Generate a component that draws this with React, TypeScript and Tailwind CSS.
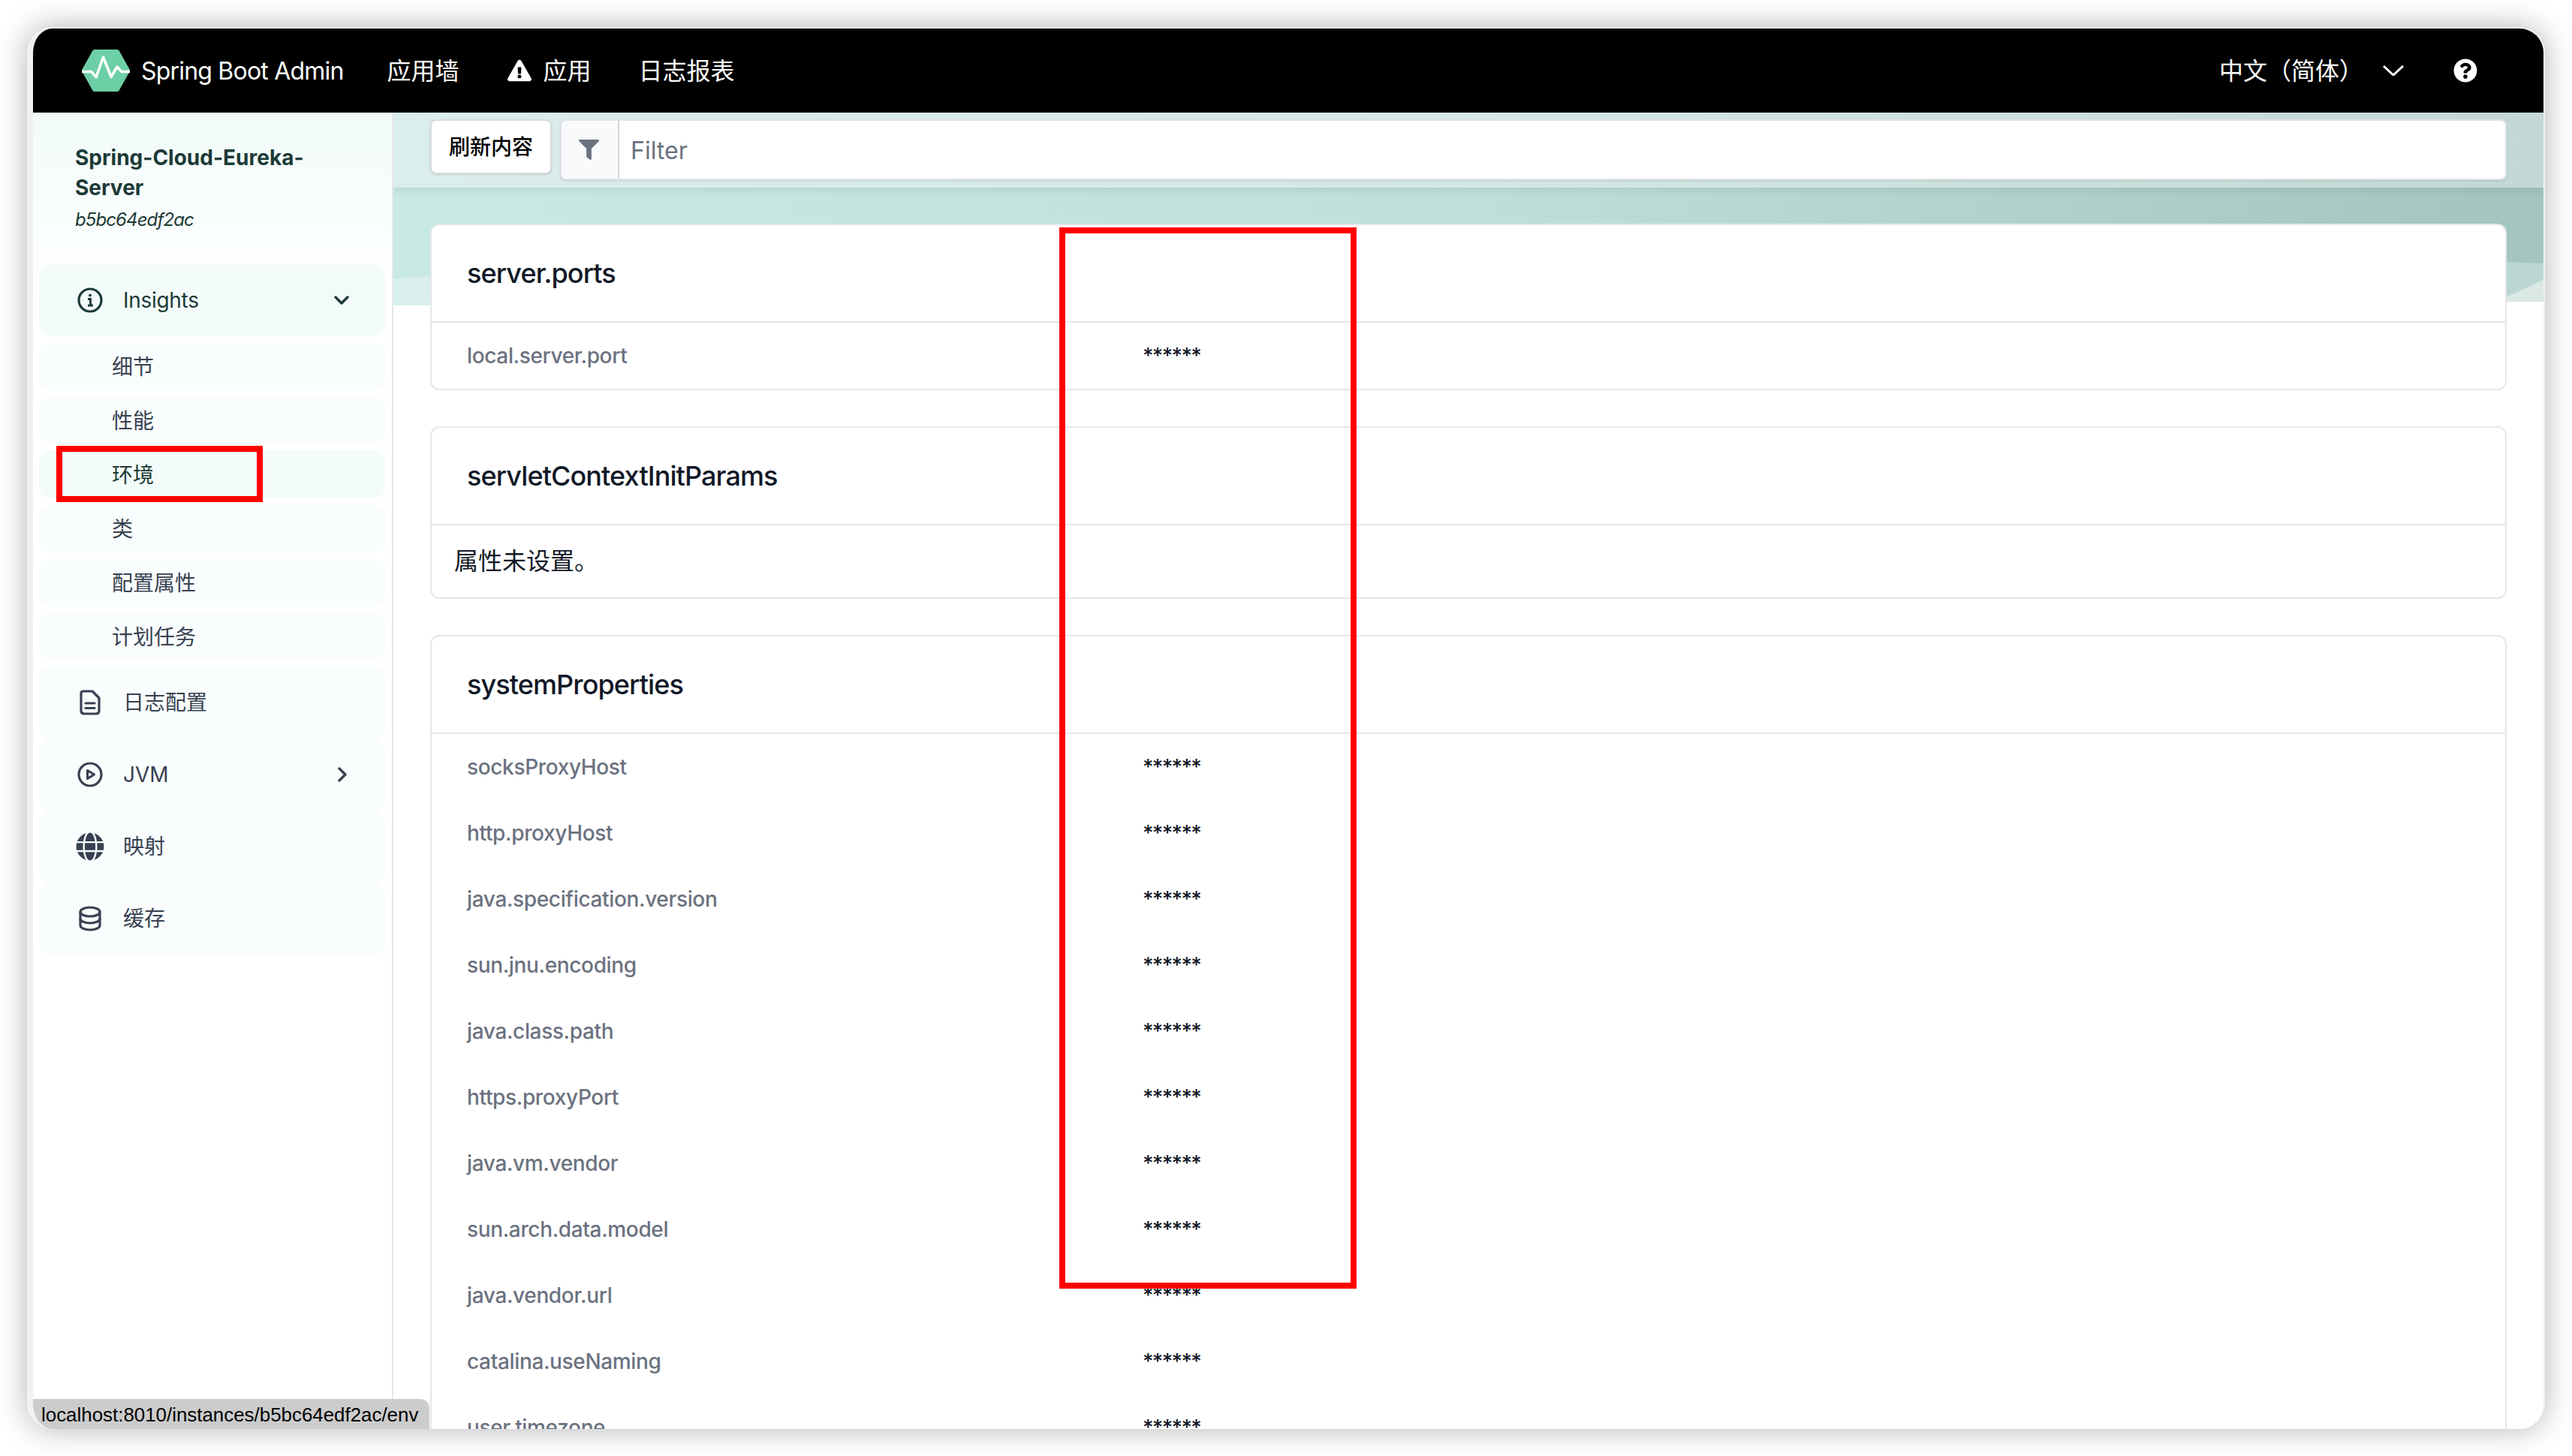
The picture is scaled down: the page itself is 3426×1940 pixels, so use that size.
import React from "react";
import { FaExclamationTriangle, FaQuestionCircle, FaFilter, FaGlobe } from "react-icons/fa";

const Logo = () => (
  <svg width="66" height="60" viewBox="-1 -1 66 60" className="shrink-0">
    <path d="M3 29 L17 4 H47 L61 29 L47 54 H17 Z" fill="#6dcfa6" stroke="#6dcfa6" strokeWidth="6" strokeLinejoin="round" />
    <path d="M0 30.6 H13 L19 38 L28.5 11 L39 37.5 L47 24 L53 30.6 H64" fill="none" stroke="#fff" strokeWidth="3.5" strokeLinejoin="round" />
  </svg>
);

const InfoIcon = () => (
  <svg width="34" height="34" viewBox="0 0 34 34" fill="none" stroke="currentColor" strokeWidth="3.2" className="shrink-0">
    <circle cx="17" cy="17" r="15" />
    <circle cx="17" cy="10.5" r="1.9" fill="currentColor" stroke="none" />
    <path d="M14 15.5 H17.5 V24 M14 24 H21" strokeWidth="2.8" />
  </svg>
);

const DocIcon = () => (
  <svg width="28" height="34" viewBox="0 0 28 34" fill="none" stroke="currentColor" strokeWidth="3.2" strokeLinejoin="round" className="shrink-0">
    <path d="M5 2 H17 L26 11 V28 Q26 32 22 32 H6 Q2 32 2 28 V5 Q2 2 5 2 Z" />
    <path d="M8 18 H20 M8 24.5 H20" strokeLinecap="round" />
  </svg>
);

const PlayIcon = () => (
  <svg width="34" height="34" viewBox="0 0 34 34" fill="none" stroke="currentColor" strokeWidth="3.2" strokeLinejoin="round" className="shrink-0">
    <circle cx="17" cy="17" r="15" />
    <path d="M13.5 11.5 L22.5 17 L13.5 22.5 Z" />
  </svg>
);

const DbIcon = () => (
  <svg width="30" height="34" viewBox="0 0 30 34" fill="none" stroke="currentColor" strokeWidth="3.2" className="shrink-0">
    <ellipse cx="15" cy="8" rx="13" ry="6" />
    <path d="M2 8 V26 C2 29.5 8 32 15 32 C22 32 28 29.5 28 26 V8" />
    <path d="M2 17 C2 20.5 8 23 15 23 C22 23 28 20.5 28 17" />
  </svg>
);

const Chevron = ({ dir }: { dir: "down" | "right" }) => (
  <svg width="20" height="20" viewBox="0 0 20 20" fill="none" stroke="currentColor" strokeWidth="3.4" strokeLinecap="round" strokeLinejoin="round" className="shrink-0">
    {dir === "down" ? <path d="M2 6 L10 14 L18 6" /> : <path d="M6 2 L14 10 L6 18" />}
  </svg>
);

const Hero = () => (
  <svg className="absolute left-0 top-0 w-full h-[258px]" viewBox="0 0 2864 258" preserveAspectRatio="none">
    <defs>
      <linearGradient id="base" x1="0" y1="0" x2="1" y2="0">
        <stop offset="0" stopColor="#c9e9e5" />
        <stop offset="0.5" stopColor="#bfdfda" />
        <stop offset="1" stopColor="#a2c5bf" />
      </linearGradient>
      <linearGradient id="mid" x1="0" y1="0" x2="1" y2="0">
        <stop offset="0" stopColor="#d9f0ed" />
        <stop offset="1" stopColor="#bbd7d2" />
      </linearGradient>
    </defs>
    <rect width="2864" height="258" fill="url(#base)" />
    <path d="M0 221 C 900 170, 2000 165, 2864 201 V258 H0 Z" fill="url(#mid)" />
    <path d="M2300 258 L2816 245 L2864 223 V258 Z" fill="#dbe8e5" />
    <path d="M0 257 L2864 252 V258 H0 Z" fill="#ffffff" />
  </svg>
);

const SubItem = ({ label, active }: { label: string; active?: boolean }) => (
  <div className={`h-16 rounded-2xl flex items-center pl-[97px] pt-[2px] text-[28px] ${active ? "bg-[#f3fcfa] text-[#1c3a36]" : "bg-[#f9fdfd] text-[#374151]"}`}>
    {label}
  </div>
);

const TopItem = ({ icon, label, arrow }: { icon: React.ReactNode; label: string; arrow?: boolean }) => (
  <div className="h-24 rounded-2xl bg-[#f9fdfd] flex items-center text-[28px] text-[#374151] pr-[47px]">
    <div className="flex justify-center w-[112px] pl-[23px]">{icon}</div>
    <span className="flex-1">{label}</span>
    {arrow && <Chevron dir="right" />}
  </div>
);

const Row = ({ label }: { label: string }) => (
  <div className="flex h-[88px] items-center px-[47px] text-[28px]">
    <div className="w-[900px] font-medium tracking-[-0.35px] text-[#6b7280]">{label}</div>
    <div className="font-medium tracking-[-1.7px] text-[#111827] -mt-[1px]">******</div>
  </div>
);

const Card = ({ title, children, className }: { title: string; children: React.ReactNode; className?: string }) => (
  <section className={`rounded-xl border-2 border-[#e5e7eb] bg-white ${className ?? ""}`}>
    <header className="h-[130px] flex items-center px-[47px] border-b-2 border-[#e5e7eb] text-[36px] font-medium tracking-[-0.9px] text-[#111827]">
      <span className="-mt-[1px]">{title}</span>
    </header>
    {children}
  </section>
);

const props = [
  "socksProxyHost",
  "http.proxyHost",
  "java.specification.version",
  "sun.jnu.encoding",
  "java.class.path",
  "https.proxyPort",
  "java.vm.vendor",
  "sun.arch.data.model",
  "java.vendor.url",
  "catalina.useNaming",
  "user.timezone",
];

export default function App() {
  return (
    <div className="h-[1940px] overflow-hidden bg-white pl-[36px] pt-[36px] font-['Inter','Noto_Sans_CJK_SC',sans-serif]">
      <div className="relative w-[3354px] h-[1868px] rounded-[34px] border-t-2 border-r-2 border-l-8 border-[#f1f1f1] bg-white shadow-[0_0_40px_rgba(0,0,0,0.3)] overflow-hidden flex flex-col">
        {/* navbar */}
        <nav className="h-[112px] shrink-0 bg-black text-white flex items-center text-[32px] pl-[64px]">
          <Logo />
          <span className="ml-[14px] mt-[2px] tracking-[-0.8px]">Spring Boot Admin</span>
          <span className="ml-[58px] mt-[2px]">应用墙</span>
          <span className="ml-[64px] flex items-center">
            <FaExclamationTriangle size={32} />
            <span className="ml-[16px] mt-[2px]">应用</span>
          </span>
          <span className="ml-[63px] mt-[2px]">日志报表</span>
          <span className="ml-auto mt-[2px]">中文（简体）</span>
          <span className="ml-[26px] w-[28px]">
            <svg width="28" height="14" viewBox="0 0 28 14" fill="none" stroke="currentColor" strokeWidth="3">
              <path d="M1 1 L14 13 L27 1" />
            </svg>
          </span>
          <FaQuestionCircle size={32} className="ml-[66px] mr-[88px]" />
        </nav>

        <div className="flex flex-1 min-h-0">
          {/* sidebar */}
          <aside className="w-[480px] shrink-0 border-r-2 border-[#e5e7eb] bg-white pl-[8px] pr-[9px] relative">
            <div className="absolute left-0 top-0 w-full h-[240px] bg-gradient-to-b from-[#f1fbfa] to-white" />
            <div className="relative">
              <div className="h-[202px] pl-[48px] pt-[40px] text-[#1c3a36]">
                <div className="text-[28px] leading-[40px] font-bold">
                  Spring-Cloud-Eureka-
                  <br />
                  Server
                </div>
                <div className="text-[24px] leading-[32px] italic tracking-[-0.9px] mt-[7px]">b5bc64edf2ac</div>
              </div>
              <div className="flex flex-col gap-2">
                <div className="h-24 rounded-2xl bg-[#f3fbfa] flex items-center text-[28px] text-[#1c3a36] pl-[51px] pr-[48px]">
                  <InfoIcon />
                  <span className="ml-[27px] flex-1 tracking-[-0.3px]">Insights</span>
                  <Chevron dir="down" />
                </div>
                <SubItem label="细节" />
                <SubItem label="性能" />
                <SubItem label="环境" active />
                <SubItem label="类" />
                <SubItem label="配置属性" />
                <SubItem label="计划任务" />
              </div>
              <div className="flex flex-col mt-2">
                <TopItem icon={<DocIcon />} label="日志配置" />
                <TopItem icon={<PlayIcon />} label="JVM" arrow />
                <TopItem icon={<FaGlobe size={38} />} label="映射" />
                <TopItem icon={<DbIcon />} label="缓存" />
              </div>
            </div>
          </aside>

          {/* main */}
          <main className="relative flex-1 min-w-0 overflow-hidden">
            <Hero />
            <div className="relative h-[100px] bg-[#f4f4f4]/40 shadow-[0_4px_10px_rgba(0,0,0,0.08)] flex items-start gap-[11px] pl-[49px] pr-[49px] pt-[9px]">
              <button className="h-[73px] w-[162px] rounded-lg border-2 border-[#d8dbe0] bg-white text-[28px] font-medium text-black shadow-sm">
                刷新内容
              </button>
              <div className="flex flex-1 h-[81px] rounded-lg border-2 border-[#e1e3e8] bg-white shadow-sm overflow-hidden">
                <div className="w-[77px] h-full bg-[#f9fafb] border-r-2 border-[#d1d5db] flex items-center justify-center pr-[2px] text-[#6b7280]">
                  <FaFilter size={27} />
                </div>
                <div className="pl-[15px] pt-[2px] flex items-center text-[32px] text-[#6b7280]">Filter</div>
              </div>
            </div>
            <div className="relative px-[49px] pt-[48px] flex flex-col">
              <Card title="server.ports">
                <Row label="local.server.port" />
              </Card>
              <Card title="servletContextInitParams" className="mt-[48px]">
                <div className="h-[96px] flex items-center pl-[30px] text-[32px] text-[#111827]">属性未设置。</div>
              </Card>
              <Card title="systemProperties" className="mt-[48px]">
                {props.map((p) => (
                  <Row key={p} label={p} />
                ))}
              </Card>
            </div>
          </main>
        </div>

        {/* browser status bubble */}
        <div className="absolute left-0 bottom-0 h-[40px] w-[528px] bg-[#cccccc] rounded-tr-xl flex items-center pl-[11px] pt-[2px] text-[25.9px] text-black font-['Liberation_Sans',sans-serif] whitespace-nowrap">
          localhost:8010/instances/b5bc64edf2ac/env
        </div>

        {/* annotation rectangles */}
        <div className="absolute left-[31px] top-[556px] w-[275px] h-[75px] border-8 border-[#ff0000]" />
        <div className="absolute left-[1367px] top-[265px] w-[396px] h-[1414px] border-8 border-[#ff0000]" />
      </div>
    </div>
  );
}
